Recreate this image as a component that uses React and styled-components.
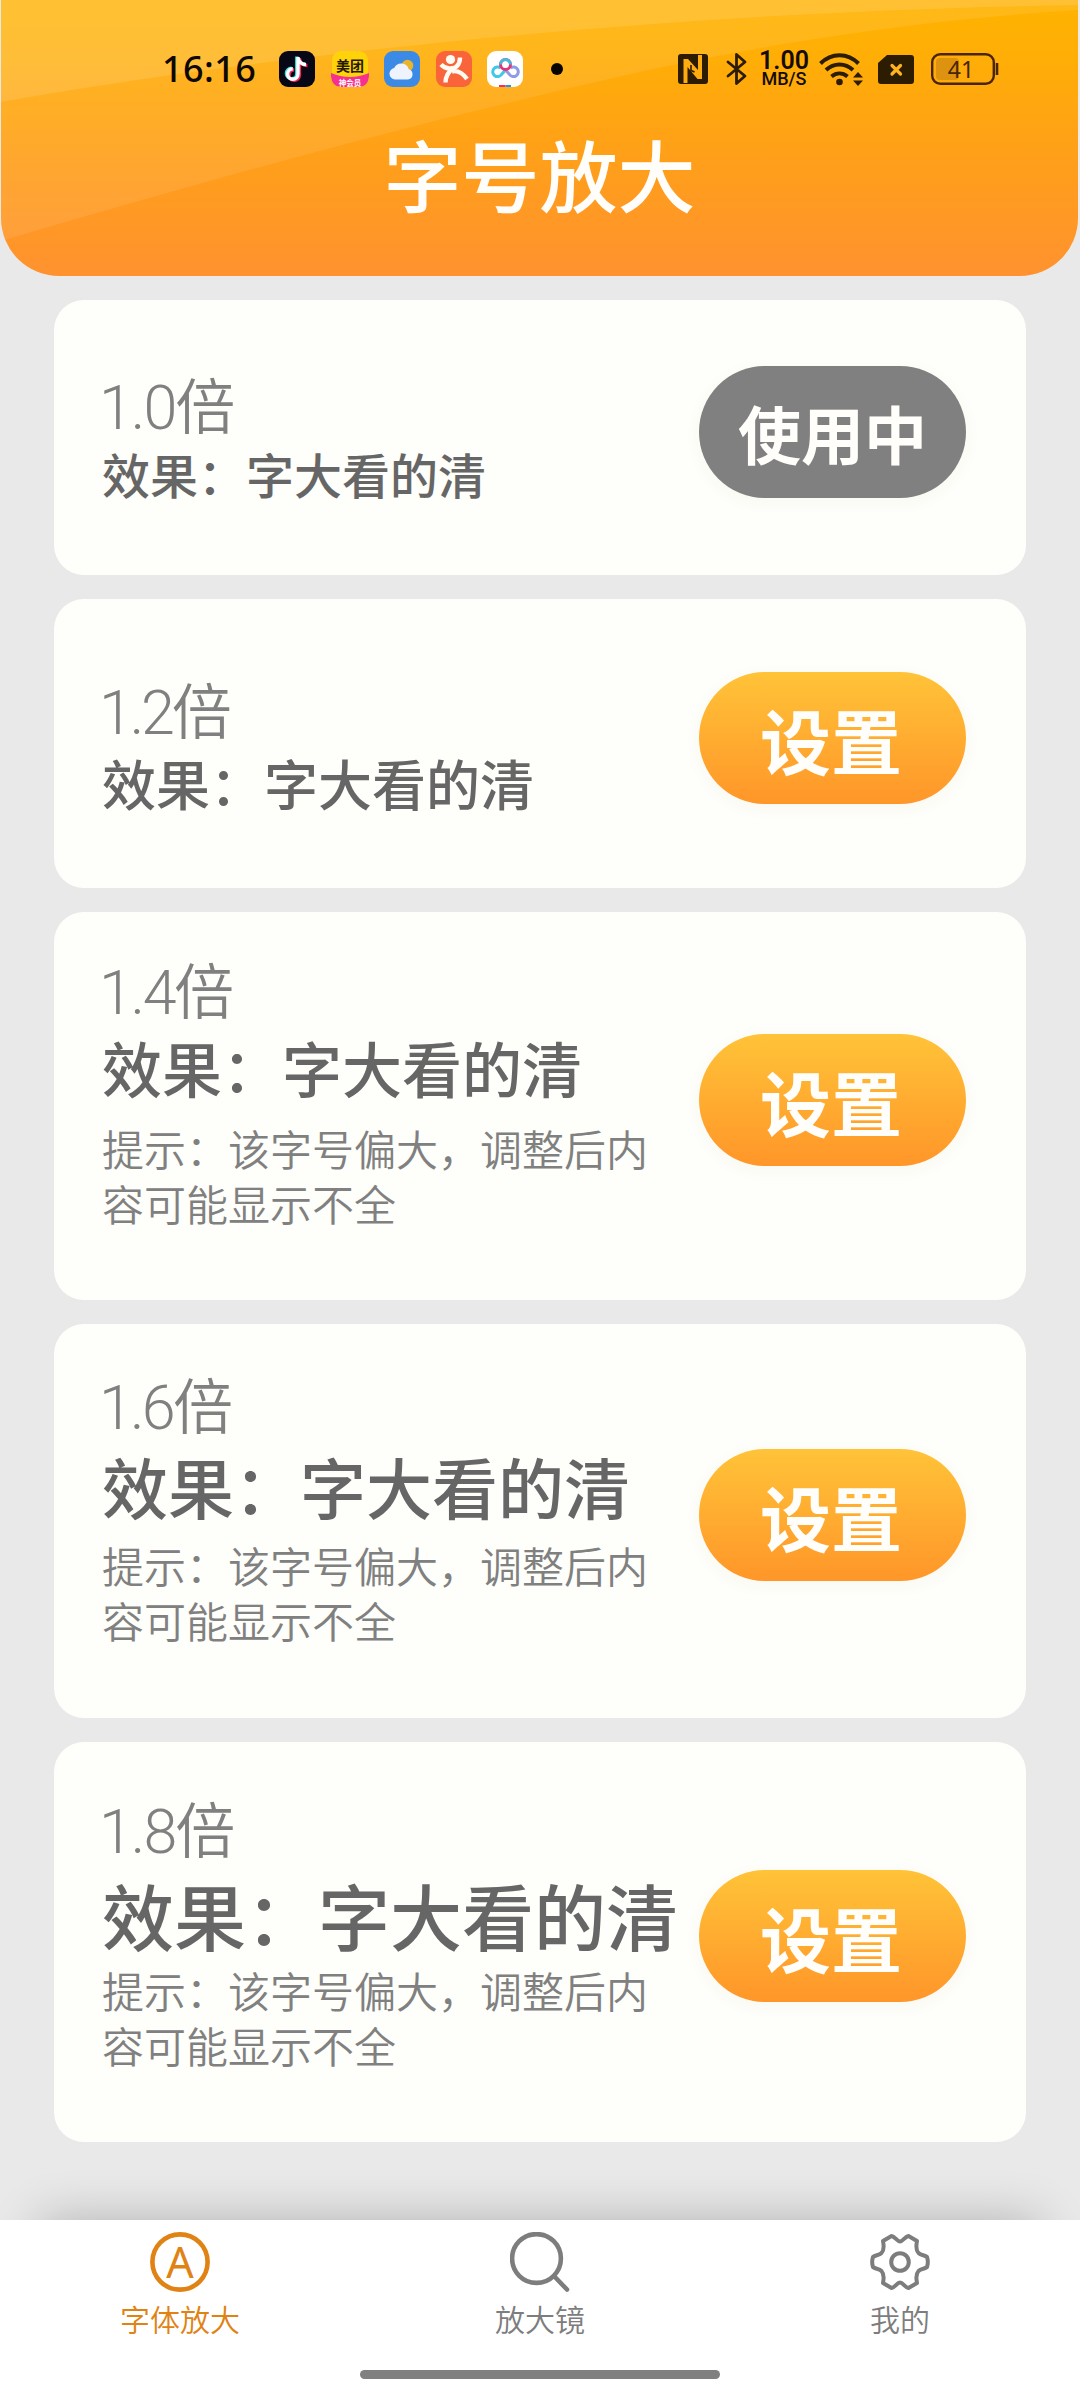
import React from 'react';
import styled, { createGlobalStyle } from 'styled-components';

const GlobalStyle = createGlobalStyle`
  * {
    box-sizing: border-box;
  }

  body {
    margin: 0;
    background: #e9e9e9;
    font-family: 'Noto Sans CJK SC', sans-serif;
  }
`;

const Page = styled.div`
  width: 1080px;
  height: 2400px;
  display: flex;
  flex-direction: column;
  overflow: hidden;
  background: #e9e9e9;
`;

const Header = styled.header`
  position: relative;
  height: 276px;
  margin: 0 2px 0 1px;
  flex-shrink: 0;
  border-radius: 0 0 58px 58px;
  overflow: hidden;
  background: linear-gradient(#ffb300 0%, #ffae06 20%, #ff9f1a 58%, #ff922f 100%);
`;

const Waves = styled.svg`
  position: absolute;
  inset: 0;
`;

const StatusBar = styled.div`
  position: relative;
  display: flex;
  align-items: center;
  height: 36px;
  margin-top: 51px;
  padding: 0 79px 0 161px;
`;

const Clock = styled.span`
  width: 117px;
  font: 500 36px/36px 'Noto Sans', sans-serif;
  letter-spacing: 0.4px;
  color: #0d0800;
`;

const AppIcons = styled.div`
  display: flex;
  gap: 15.5px;
  flex: 1;
  align-items: center;
`;

const Dot = styled.i`
  width: 12px;
  height: 12px;
  margin-left: 12px;
  border-radius: 50%;
  background: #080500;
`;

const SystemIcons = styled.div`
  display: flex;
  align-items: center;
  color: #2b1c02;

  svg {
    display: block;
    flex-shrink: 0;
  }
`;

const IconSlot = styled.span`
  margin-right: ${({ $gap }) => $gap}px;
`;

const Speed = styled.div`
  width: 50px;
  margin-right: 10px;
  text-align: center;
  color: #140c00;
  font-family: Roboto, sans-serif;
`;

const SpeedValue = styled.div`
  font-size: 25px;
  line-height: 18px;
  font-weight: 600;
`;

const SpeedUnit = styled.div`
  font-size: 18px;
  line-height: 17px;
  font-weight: 500;
`;

const Title = styled.h1`
  position: relative;
  margin: 30px 0 0;
  text-align: center;
  font-size: 78px;
  line-height: 112px;
  font-weight: 500;
  color: #fffefa;
`;

const List = styled.main`
  display: flex;
  flex-direction: column;
  gap: 24px;
  flex: 1;
  padding: 24px 54px 0;
`;

const Card = styled.section`
  display: flex;
  align-items: center;
  justify-content: space-between;
  height: ${({ $height }) => $height}px;
  padding: 0 60px 12px 48px;
  border-radius: 30px;
  background: #fefefa;
`;

const Info = styled.div`
  align-self: flex-start;
  width: 580px;
  padding-top: ${({ $top }) => $top}px;
  white-space: nowrap;
`;

const Scale = styled.div`
  height: 62px;
  font-size: 60px;
  line-height: 60px;
  font-weight: 350;
  color: #808080;
`;

const Factor = styled.span`
  margin-left: -3px;
  font-family: Roboto, sans-serif;
  font-weight: 300;
  font-size: 61px;
  letter-spacing: ${({ $spacing }) => $spacing}px;
`;

const Effect = styled.div`
  margin-top: ${({ $gap }) => $gap}px;
  font-size: ${({ $size }) => $size}px;
  line-height: ${({ $size }) => $size}px;
  font-weight: 500;
  color: #666;
`;

const Hint = styled.p`
  width: 550px;
  margin: ${({ $gap }) => $gap}px 0 0;
  font-size: 42px;
  line-height: 55px;
  font-weight: 350;
  white-space: normal;
  color: #808080;
`;

const ActionButton = styled.button`
  width: 267px;
  height: 132px;
  padding: 0 ${({ $active }) => ($active ? 0 : 3)}px 0 0;
  flex-shrink: 0;
  border: none;
  border-radius: 66px;
  font-family: inherit;
  font-weight: 700;
  font-size: ${({ $active }) => ($active ? 63 : 71)}px;
  line-height: 130px;
  color: #fffefa;
  background: ${({ $active }) => ($active ? '#808080' : 'linear-gradient(#ffc338, #ff9629)')};
  box-shadow: 0 4px 18px rgba(120, 100, 60, 0.04);
`;

const TabBar = styled.nav`
  display: flex;
  position: relative;
  height: 150px;
  background: #fff;
  box-shadow: 0 -40px 50px -40px rgba(0, 0, 0, 0.24);
`;

const Tab = styled.div`
  display: flex;
  flex: 1;
  flex-direction: column;
  align-items: center;
  padding-top: 12px;
  font-size: 30px;
  line-height: 30px;
  font-weight: 350;
  color: ${({ $active }) => ($active ? '#e08314' : '#7d7d7d')};
`;

const TabLabel = styled.span`
  margin-top: 11px;
`;

const HomeArea = styled.div`
  position: relative;
  display: flex;
  justify-content: center;
  height: 30px;
  background: #fff;
`;

const HomeIndicator = styled.div`
  width: 360px;
  height: 9px;
  border-radius: 5px;
  background: #808080;
`;

const TikTokIcon = () => (
  <svg width="36" height="36" viewBox="0 0 36 36">
    <rect width="36" height="36" rx="9" fill="#080716" />
    <g fill="none" strokeWidth="3.4">
      <path d="M19 6v17a5.2 5.2 0 1 1-5.2-5.2M19 7c1 4 4 6.5 8 6.5" stroke="#31e4e0" transform="translate(-1.2 -.6)" />
      <path d="M19 6v17a5.2 5.2 0 1 1-5.2-5.2M19 7c1 4 4 6.5 8 6.5" stroke="#f32a59" transform="translate(1.4 1)" />
      <path d="M19 6v17a5.2 5.2 0 1 1-5.2-5.2M19 7c1 4 4 6.5 8 6.5" stroke="#fff" />
    </g>
  </svg>
);

const MeituanIcon = () => (
  <svg width="38" height="36" viewBox="0 0 38 36">
    <rect x="1" width="36" height="36" rx="9" fill="#ffd20a" />
    <path d="M0 22q19 8 38 0v3q-1 11-10 11H10Q1 36 0 25z" fill="#f5308f" />
    <text x="19" y="20" textAnchor="middle" fontSize="14" fontWeight="700" fill="#241a00">美团</text>
    <text x="19" y="34.5" textAnchor="middle" fontSize="7.5" fontWeight="700" fill="#fff">神会员</text>
  </svg>
);

const WeatherIcon = () => (
  <svg width="36" height="36" viewBox="0 0 36 36">
    <rect width="36" height="36" rx="9" fill="#3a8ae6" />
    <circle cx="23.5" cy="14.5" r="5.8" fill="#e9b52c" />
    <path d="M11 28.5a5.8 5.8 0 0 1-.8-11.5 7.8 7.8 0 0 1 14.6 1.2 5.3 5.3 0 0 1-.8 10.3z" fill="#eef3fd" />
  </svg>
);

const DianpingIcon = () => (
  <svg width="36" height="36" viewBox="0 0 36 36">
    <rect width="36" height="36" rx="9" fill="#f9643a" />
    <circle cx="14.5" cy="8.5" r="4.6" fill="#fffaf2" />
    <g fill="none" stroke="#fffaf2" strokeWidth="4.4">
      <path d="M5 13.5c4 4.5 12 5.5 16 1.5 2-2 3-5 3-8.5" />
      <path d="M9.5 31.5c0-7 3-11 8-15" />
      <path d="M16 20.5c6-1.5 11 2 15 7.5" />
    </g>
  </svg>
);

const CloudDiskIcon = () => (
  <svg width="36" height="36" viewBox="0 0 36 36">
    <rect width="36" height="36" rx="9" fill="#fff" />
    <g fill="none" strokeWidth="3">
      <path d="M18.5 19l-4 4.5a4.8 4.8 0 1 1-1-6.5" stroke="#3fc9e6" />
      <path d="M18.5 19l4 4.5a4.8 4.8 0 1 0 1-6.5" stroke="#8f9be6" />
      <circle cx="18.5" cy="13.5" r="5" stroke="#e0357a" />
      <path d="M13.5 13.5a5 5 0 0 1 10 0" stroke="#49b9de" />
    </g>
    <path d="M12 34h6.5v2H12z" fill="#e8336b" />
    <path d="M18.5 34H24v2h-5.5z" fill="#2c8ff0" />
  </svg>
);

const NfcIcon = () => (
  <svg width="30" height="30" viewBox="0 0 30 30">
    <rect width="30" height="30" rx="3" fill="currentColor" />
    <path d="M5.5 5H10L20 16V1H24V25H19.5L9.5 13V29H5.5Z" fill="#ffac0e" />
    <path d="M13 11v5.5l3.5 1.5" fill="none" stroke="currentColor" strokeWidth="1.6" />
  </svg>
);

const BluetoothIcon = () => (
  <svg width="22" height="34" viewBox="0 0 22 34">
    <path d="M2 10l17 14-8.5 7.5v-29L19 10 2 24" fill="none" stroke="currentColor" strokeWidth="2.8" strokeLinejoin="round" strokeLinecap="round" />
  </svg>
);

const WifiIcon = () => (
  <svg width="45" height="34" viewBox="0 0 45 34">
    <g fill="none" stroke="currentColor" strokeWidth="4">
      <path d="M1.5 11.5c11-11 27-11 38 0" />
      <path d="M7 18c8-7.5 19-7.5 27 0" />
      <path d="M12.5 24.5c5-4 11-4 16 0" />
    </g>
    <circle cx="20.5" cy="30" r="3.3" fill="currentColor" />
    <path d="M34 25.5l5-5.5 5 5.5zM34 28.5l5 5.5 5-5.5z" fill="currentColor" />
  </svg>
);

const SimIcon = () => (
  <svg width="36" height="29" viewBox="0 0 36 29">
    <path d="M9 0h24a3 3 0 0 1 3 3v23a3 3 0 0 1-3 3H3a3 3 0 0 1-3-3V8z" fill="currentColor" />
    <path d="M14 10.5l8.5 8.5M22.5 10.5l-8.5 8.5" stroke="#ffb41f" strokeWidth="3.2" strokeLinecap="round" />
  </svg>
);

const BatteryIcon = () => (
  <svg width="68" height="32" viewBox="0 0 68 32">
    <rect x="1.2" y="1.2" width="61.6" height="29.6" rx="8" fill="none" stroke="#4a2407" strokeWidth="2.4" />
    <rect x="5" y="5" width="23" height="22" rx="4" fill="#dd930f" />
    <path d="M66 10v12" stroke="#4a2407" strokeWidth="2.6" />
    <text x="30" y="24.5" textAnchor="middle" fontFamily="Noto Sans" fontSize="23" fill="#4a2407">41</text>
  </svg>
);

const FontIcon = () => (
  <svg width="60" height="60" viewBox="0 0 60 60">
    <circle cx="30" cy="30" r="27.6" fill="none" stroke="currentColor" strokeWidth="4.6" />
    <text x="30" y="45.5" textAnchor="middle" fontFamily="Noto Sans" fontSize="43" fontWeight="400" fill="currentColor">A</text>
  </svg>
);

const SearchIcon = () => (
  <svg width="60" height="60" viewBox="0 0 60 60">
    <circle cx="26.5" cy="26.5" r="24.4" fill="none" stroke="currentColor" strokeWidth="4.6" />
    <path d="M44 44l13 13.5" stroke="currentColor" strokeWidth="4.6" strokeLinecap="round" />
  </svg>
);

const GearIcon = () => (
  <svg width="60" height="60" viewBox="0 0 60 60">
    <g fill="none" stroke="currentColor" strokeWidth="4" strokeLinejoin="round">
      <path d="M30 9.5C27 9.5 25 4.5 21.5 4L13 9C13.5 13 15 17 11.5 21C9 23.5 5 23 3 25C2 28 2 32 3 35C5 37 9 36.5 11.5 39C15 43 13.5 47 13 51L21.5 56C25 55.5 27 50.5 30 50.5C33 50.5 35 55.5 38.5 56L47 51C46.5 47 45 43 48.5 39C51 36.5 55 37 57 35C58 32 58 28 57 25C55 23 51 23.5 48.5 21C45 17 46.5 13 47 9L38.5 4C35 4.5 33 9.5 30 9.5Z" />
      <circle cx="30" cy="30" r="8.8" />
    </g>
  </svg>
);

const options = [
  { factor: '1.0', size: 48, height: 275, top: 73, gap: 14, spacing: -2, active: true },
  { factor: '1.2', size: 54, height: 289, top: 79, gap: 16, spacing: -3.2 },
  { factor: '1.4', size: 60, height: 388, top: 46, gap: 17, spacing: -2.4, hintGap: 23 },
  { factor: '1.6', size: 66, height: 394, top: 49, gap: 17, spacing: -2.8, hintGap: 19 },
  { factor: '1.8', size: 72, height: 400, top: 55, gap: 19, spacing: -2, hintGap: 12 },
];

const tabs = [
  { label: '字体放大', Icon: FontIcon, active: true },
  { label: '放大镜', Icon: SearchIcon },
  { label: '我的', Icon: GearIcon },
];

const FontOption = ({ option }) => (
  <Card $height={option.height}>
    <Info $top={option.top}>
      <Scale>
        <Factor $spacing={option.spacing}>{option.factor}</Factor>倍
      </Scale>
      <Effect $size={option.size} $gap={option.gap}>效果：字大看的清</Effect>
      {option.hintGap && (
        <Hint $gap={option.hintGap}>提示：该字号偏大，调整后内容可能显示不全</Hint>
      )}
    </Info>
    <ActionButton $active={option.active}>{option.active ? '使用中' : '设置'}</ActionButton>
  </Card>
);

const App = () => {
  return (
    <Page>
      <GlobalStyle />
      <Header>
        <Waves width="1078" height="276" viewBox="0 0 1078 276">
          <path d="M0 0H1078V10C880 22 700 55 540 95C350 140 180 188 0 241Z" fill="#fff" fillOpacity=".09" />
          <path d="M0 0H1078V5C880 8 700 19 540 33C350 50 150 75 0 102Z" fill="#fff" fillOpacity=".12" />
        </Waves>
        <StatusBar>
          <Clock>16:16</Clock>
          <AppIcons>
            <TikTokIcon />
            <MeituanIcon />
            <WeatherIcon />
            <DianpingIcon />
            <CloudDiskIcon />
            <Dot />
          </AppIcons>
          <SystemIcons>
            <IconSlot $gap={18}><NfcIcon /></IconSlot>
            <IconSlot $gap={11}><BluetoothIcon /></IconSlot>
            <Speed>
              <SpeedValue>1.00</SpeedValue>
              <SpeedUnit>MB/S</SpeedUnit>
            </Speed>
            <IconSlot $gap={14}><WifiIcon /></IconSlot>
            <IconSlot $gap={17}><SimIcon /></IconSlot>
            <BatteryIcon />
          </SystemIcons>
        </StatusBar>
        <Title>字号放大</Title>
      </Header>
      <List>
        {options.map((option) => (
          <FontOption key={option.factor} option={option} />
        ))}
      </List>
      <TabBar>
        {tabs.map(({ label, Icon, active }) => (
          <Tab key={label} $active={active}>
            <Icon />
            <TabLabel>{label}</TabLabel>
          </Tab>
        ))}
      </TabBar>
      <HomeArea>
        <HomeIndicator />
      </HomeArea>
    </Page>
  );
};

export default App;
